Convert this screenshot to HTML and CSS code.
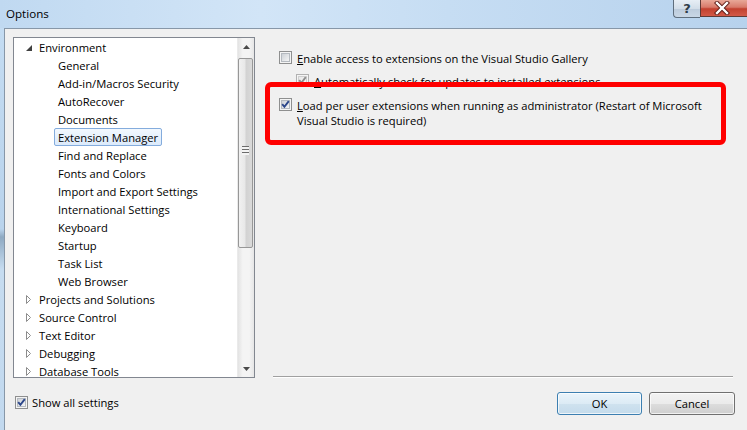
FILE: index.html
```html
<!DOCTYPE html>
<html>
<head>
<meta charset="utf-8">
<link rel="stylesheet" href="styles.css">
</head>
<body>
<svg class="defs" width="0" height="0">
  <defs>
    <linearGradient id="cbg" x1="0" y1="0" x2="1" y2="1">
      <stop offset="0" stop-color="#cbcfd5"/>
      <stop offset="1" stop-color="#f7f7f7"/>
    </linearGradient>
    <linearGradient id="cbgd" x1="0" y1="0" x2="1" y2="1">
      <stop offset="0" stop-color="#e6e6e6"/>
      <stop offset="1" stop-color="#f7f7f7"/>
    </linearGradient>
  </defs>
</svg>
<div class="window">
  <div class="titlebar">
    <span class="title">Options</span>
    <div class="caption">
      <div class="cap-help">?</div>
      <div class="cap-close">
        <svg width="16" height="14" viewBox="0 0 16 14"><path d="M3 2 L13 12 M13 2 L3 12" stroke="#5a1a14" stroke-width="4.2" stroke-linecap="square"/><path d="M3 2 L13 12 M13 2 L3 12" stroke="#fff" stroke-width="2.4" stroke-linecap="square"/></svg>
      </div>
    </div>
  </div>
  <div class="body">
    <div class="frame-left"></div>
    <div class="client">
      <div class="left">
        <div class="tree">
          <div class="tree-list">
            <div class="node lvl0"><span class="exp"><svg width="6" height="6" viewBox="0 0 6 6"><polygon points="6,0 6,6 0,6" fill="#404040"/></svg></span><span class="lbl">Environment</span></div>
            <div class="node lvl1"><span class="lbl">General</span></div>
            <div class="node lvl1"><span class="lbl">Add-in/Macros Security</span></div>
            <div class="node lvl1"><span class="lbl">AutoRecover</span></div>
            <div class="node lvl1"><span class="lbl">Documents</span></div>
            <div class="node lvl1"><span class="lbl sel">Extension Manager</span></div>
            <div class="node lvl1"><span class="lbl">Find and Replace</span></div>
            <div class="node lvl1"><span class="lbl">Fonts and Colors</span></div>
            <div class="node lvl1"><span class="lbl">Import and Export Settings</span></div>
            <div class="node lvl1"><span class="lbl">International Settings</span></div>
            <div class="node lvl1"><span class="lbl">Keyboard</span></div>
            <div class="node lvl1"><span class="lbl">Startup</span></div>
            <div class="node lvl1"><span class="lbl">Task List</span></div>
            <div class="node lvl1"><span class="lbl">Web Browser</span></div>
            <div class="node lvl0"><span class="exp"><svg width="6" height="9" viewBox="0 0 6 9"><polygon points="0.5,0.5 4.5,4.5 0.5,8.5" fill="#fff" stroke="#8c8c8c"/></svg></span><span class="lbl">Projects and Solutions</span></div>
            <div class="node lvl0"><span class="exp"><svg width="6" height="9" viewBox="0 0 6 9"><polygon points="0.5,0.5 4.5,4.5 0.5,8.5" fill="#fff" stroke="#8c8c8c"/></svg></span><span class="lbl">Source Control</span></div>
            <div class="node lvl0"><span class="exp"><svg width="6" height="9" viewBox="0 0 6 9"><polygon points="0.5,0.5 4.5,4.5 0.5,8.5" fill="#fff" stroke="#8c8c8c"/></svg></span><span class="lbl">Text Editor</span></div>
            <div class="node lvl0"><span class="exp"><svg width="6" height="9" viewBox="0 0 6 9"><polygon points="0.5,0.5 4.5,4.5 0.5,8.5" fill="#fff" stroke="#8c8c8c"/></svg></span><span class="lbl">Debugging</span></div>
            <div class="node lvl0"><span class="exp"><svg width="6" height="9" viewBox="0 0 6 9"><polygon points="0.5,0.5 4.5,4.5 0.5,8.5" fill="#fff" stroke="#8c8c8c"/></svg></span><span class="lbl">Database Tools</span></div>
          </div>
          <div class="scrollbar">
            <div class="sb-btn"><svg width="7" height="4" viewBox="0 0 7 4"><polygon points="3.5,0 7,4 0,4" fill="#4a4a4a"/></svg></div>
            <div class="sb-track">
              <div class="sb-thumb"><span class="grip"></span></div>
            </div>
            <div class="sb-btn"><svg width="7" height="4" viewBox="0 0 7 4"><polygon points="0,0 7,0 3.5,4" fill="#4a4a4a"/></svg></div>
          </div>
        </div>
        <div class="showall">
          <svg class="cb" width="13" height="13" viewBox="0 0 13 13"><rect x=".5" y=".5" width="12" height="12" fill="#f4f4f4" stroke="#8e8f8f"/><rect x="2.5" y="2.5" width="8" height="8" fill="url(#cbg)" stroke="#b5bac0"/><path d="M3.2 6.2 L5.4 8.8 L9.8 3.2" fill="none" stroke="#2b468a" stroke-width="1.9"/></svg>
          <span>Show all settings</span>
        </div>
      </div>
      <div class="right">
        <div class="options">
          <div class="opt">
            <svg class="cb" width="13" height="13" viewBox="0 0 13 13"><rect x=".5" y=".5" width="12" height="12" fill="#f4f4f4" stroke="#8e8f8f"/><rect x="2.5" y="2.5" width="8" height="8" fill="url(#cbg)" stroke="#b5bac0"/></svg>
            <span><u>E</u>nable access to extensions on the Visual Studio Gallery</span>
          </div>
          <div class="opt sub">
            <svg class="cb" width="13" height="13" viewBox="0 0 13 13"><rect x=".5" y=".5" width="12" height="12" fill="#f4f4f4" stroke="#b1b1b1"/><rect x="2.5" y="2.5" width="8" height="8" fill="url(#cbgd)" stroke="#cfcfcf"/><path d="M3.2 6.2 L5.4 8.8 L9.8 3.2" fill="none" stroke="#8d8d8d" stroke-width="1.9"/></svg>
            <span><u>A</u>utomatically check for updates to installed extensions</span>
          </div>
          <div class="opt third">
            <svg class="cb" width="13" height="13" viewBox="0 0 13 13"><rect x=".5" y=".5" width="12" height="12" fill="#f4f4f4" stroke="#8e8f8f"/><rect x="2.5" y="2.5" width="8" height="8" fill="url(#cbg)" stroke="#b5bac0"/><path d="M3.2 6.2 L5.4 8.8 L9.8 3.2" fill="none" stroke="#2b468a" stroke-width="1.9"/></svg>
            <span><u>L</u>oad per user extensions when running as administrator (Restart of Microsoft<br>Visual Studio is required)</span>
          </div>
          <div class="highlight"></div>
        </div>
        <div class="sep"></div>
        <div class="buttons">
          <div class="btn ok">OK</div>
          <div class="btn">Cancel</div>
        </div>
      </div>
    </div>
  </div>
</div>
</body>
</html>
```

FILE: styles.css
```css
html, body {
  margin: 0;
  padding: 0;
}
body {
  width: 747px;
  height: 430px;
  overflow: hidden;
  font-family: "Open Sans", "Noto Sans", sans-serif;
  font-size: 11.2px;
  color: #000;
  background: #c9dff3;
}
.defs {
  position: absolute;
  width: 0;
  height: 0;
}
.window {
  display: flex;
  flex-direction: column;
  width: 747px;
  height: 430px;
}
.titlebar {
  height: 28px;
  display: flex;
  align-items: flex-start;
  background: linear-gradient(to right, #c0d9f1 0%, #d2e5f7 35%, #c6ddf3 60%, #b7d2ed 100%);
  flex-shrink: 0;
}
.title {
  margin-left: 6px;
  line-height: 27px;
  font-size: 11.6px;
  color: #000;
}
.caption {
  margin-left: auto;
  display: flex;
  height: 18px;
}
.cap-help {
  width: 26px;
  height: 17px;
  border: 1px solid #5f6e7d;
  border-top: none;
  border-right: none;
  border-bottom-left-radius: 4px;
  background: linear-gradient(to bottom, #e7eef5 0%, #d3dee9 50%, #bccbdb 51%, #c9d7e6 100%);
  color: #2f3b48;
  font-family: "DejaVu Sans", sans-serif;
  font-weight: bold;
  font-size: 13px;
  line-height: 17px;
  text-align: center;
}
.cap-close {
  width: 47px;
  height: 17px;
  border-bottom: 1px solid #5f3a36;
  border-left: 1px solid #5f3a36;
  background: linear-gradient(to bottom, #e8a898 0%, #d87a6a 45%, #c2412f 55%, #d35a48 100%);
  display: flex;
  align-items: center;
  justify-content: center;
  padding-right: 4px;
  box-sizing: border-box;
}
.body {
  flex: 1;
  display: flex;
  min-height: 0;
}
.frame-left {
  width: 4px;
  background: linear-gradient(to bottom, #c4dcf2, #b9d3ec 50%, #8ea9c2 52%, #c6dcf0 60%, #c2d9ef);
  flex-shrink: 0;
}
.client {
  flex: 1;
  display: flex;
  background: #f0f0f0;
  border-top: 1px solid #8797a8;
  border-left: 1px solid #8797a8;
}
.left {
  width: 250px;
  padding: 8px 0 0 8px;
  box-sizing: border-box;
  flex-shrink: 0;
}
.tree {
  width: 242px;
  height: 341px;
  box-sizing: border-box;
  border: 1px solid #828790;
  background: #fff;
  display: flex;
}
.tree-list {
  flex: 1;
  overflow: hidden;
}
.node {
  height: 18px;
  display: flex;
  align-items: center;
  white-space: nowrap;
}
.lvl0 {
  padding-left: 12px;
}
.lvl1 {
  padding-left: 40px;
}
.exp {
  width: 9px;
  display: flex;
  align-items: center;
}
.lvl0 .exp svg {
  margin-top: 1px;
}
.lbl {
  padding: 1px 3px 0;
  border: 1px solid transparent;
  line-height: 15px;
}
.lbl.sel {
  border-color: #84acdd;
  border-radius: 2px;
  background: linear-gradient(to bottom, #f2f8fe, #dbeafb);
}
.scrollbar {
  width: 17px;
  display: flex;
  flex-direction: column;
  background: linear-gradient(to right, #e3e3e3, #f4f4f4 30%, #f4f4f4 70%, #e6e6e6);
  border-left: 1px solid #eaeaea;
  box-sizing: border-box;
}
.sb-btn {
  height: 17px;
  display: flex;
  align-items: center;
  justify-content: center;
}
.sb-track {
  flex: 1;
  padding: 3px 1px 112px 0;
  display: flex;
}
.sb-thumb {
  flex: 1;
  border: 1px solid #979797;
  border-radius: 2px;
  background: linear-gradient(to right, #f1f1f1, #e8e8e8 45%, #d2d2d2 55%, #dadada);
  display: flex;
  align-items: center;
  justify-content: center;
}
.grip {
  width: 7px;
  height: 9px;
  background: repeating-linear-gradient(to bottom, #6c6c6c 0, #6c6c6c 1px, #f4f4f4 1px, #f4f4f4 3px);
  margin-bottom: 5px;
}
.showall {
  margin: 17px 0 0 2px;
  display: flex;
  align-items: center;
  gap: 4px;
}
.cb {
  flex-shrink: 0;
  display: block;
}
.right {
  flex: 1;
  display: flex;
  flex-direction: column;
}
.options {
  position: relative;
  height: 347px;
  padding: 21px 0 0 24px;
  box-sizing: border-box;
}
.opt {
  display: flex;
  align-items: flex-start;
  gap: 5px;
  line-height: 15px;
  white-space: nowrap;
}
.opt .cb {
  margin-top: 1px;
}
.opt span {
  padding-top: 1px;
}
.opt.sub {
  margin-top: 7px;
  padding-left: 17px;
}
.opt.third {
  margin-top: 8px;
}
.highlight {
  position: absolute;
  left: 10px;
  top: 53px;
  width: 461px;
  height: 63px;
  box-sizing: border-box;
  border: 5px solid #f00;
  border-radius: 6px;
}
.sep {
  margin: 0 14px 0 18px;
  border-top: 1px solid #a0a0a0;
  border-bottom: 1px solid #fff;
}
.buttons {
  display: flex;
  justify-content: flex-end;
  gap: 7px;
  padding: 14px 12px 0 0;
}
.btn {
  width: 86px;
  height: 23px;
  box-sizing: border-box;
  border: 1px solid #707070;
  border-radius: 3px;
  background: linear-gradient(to bottom, #f2f2f2 0%, #ebebeb 50%, #dddddd 51%, #cfcfcf 100%);
  text-align: center;
  line-height: 21px;
  box-shadow: inset 0 0 0 1px rgba(255,255,255,0.7);
}
.btn.ok {
  width: 85px;
  border-color: #3c7fb1;
  background: linear-gradient(to bottom, #eaf4fb 0%, #dcebf5 50%, #cfe2ef 51%, #c4dbeb 100%);
}
```
